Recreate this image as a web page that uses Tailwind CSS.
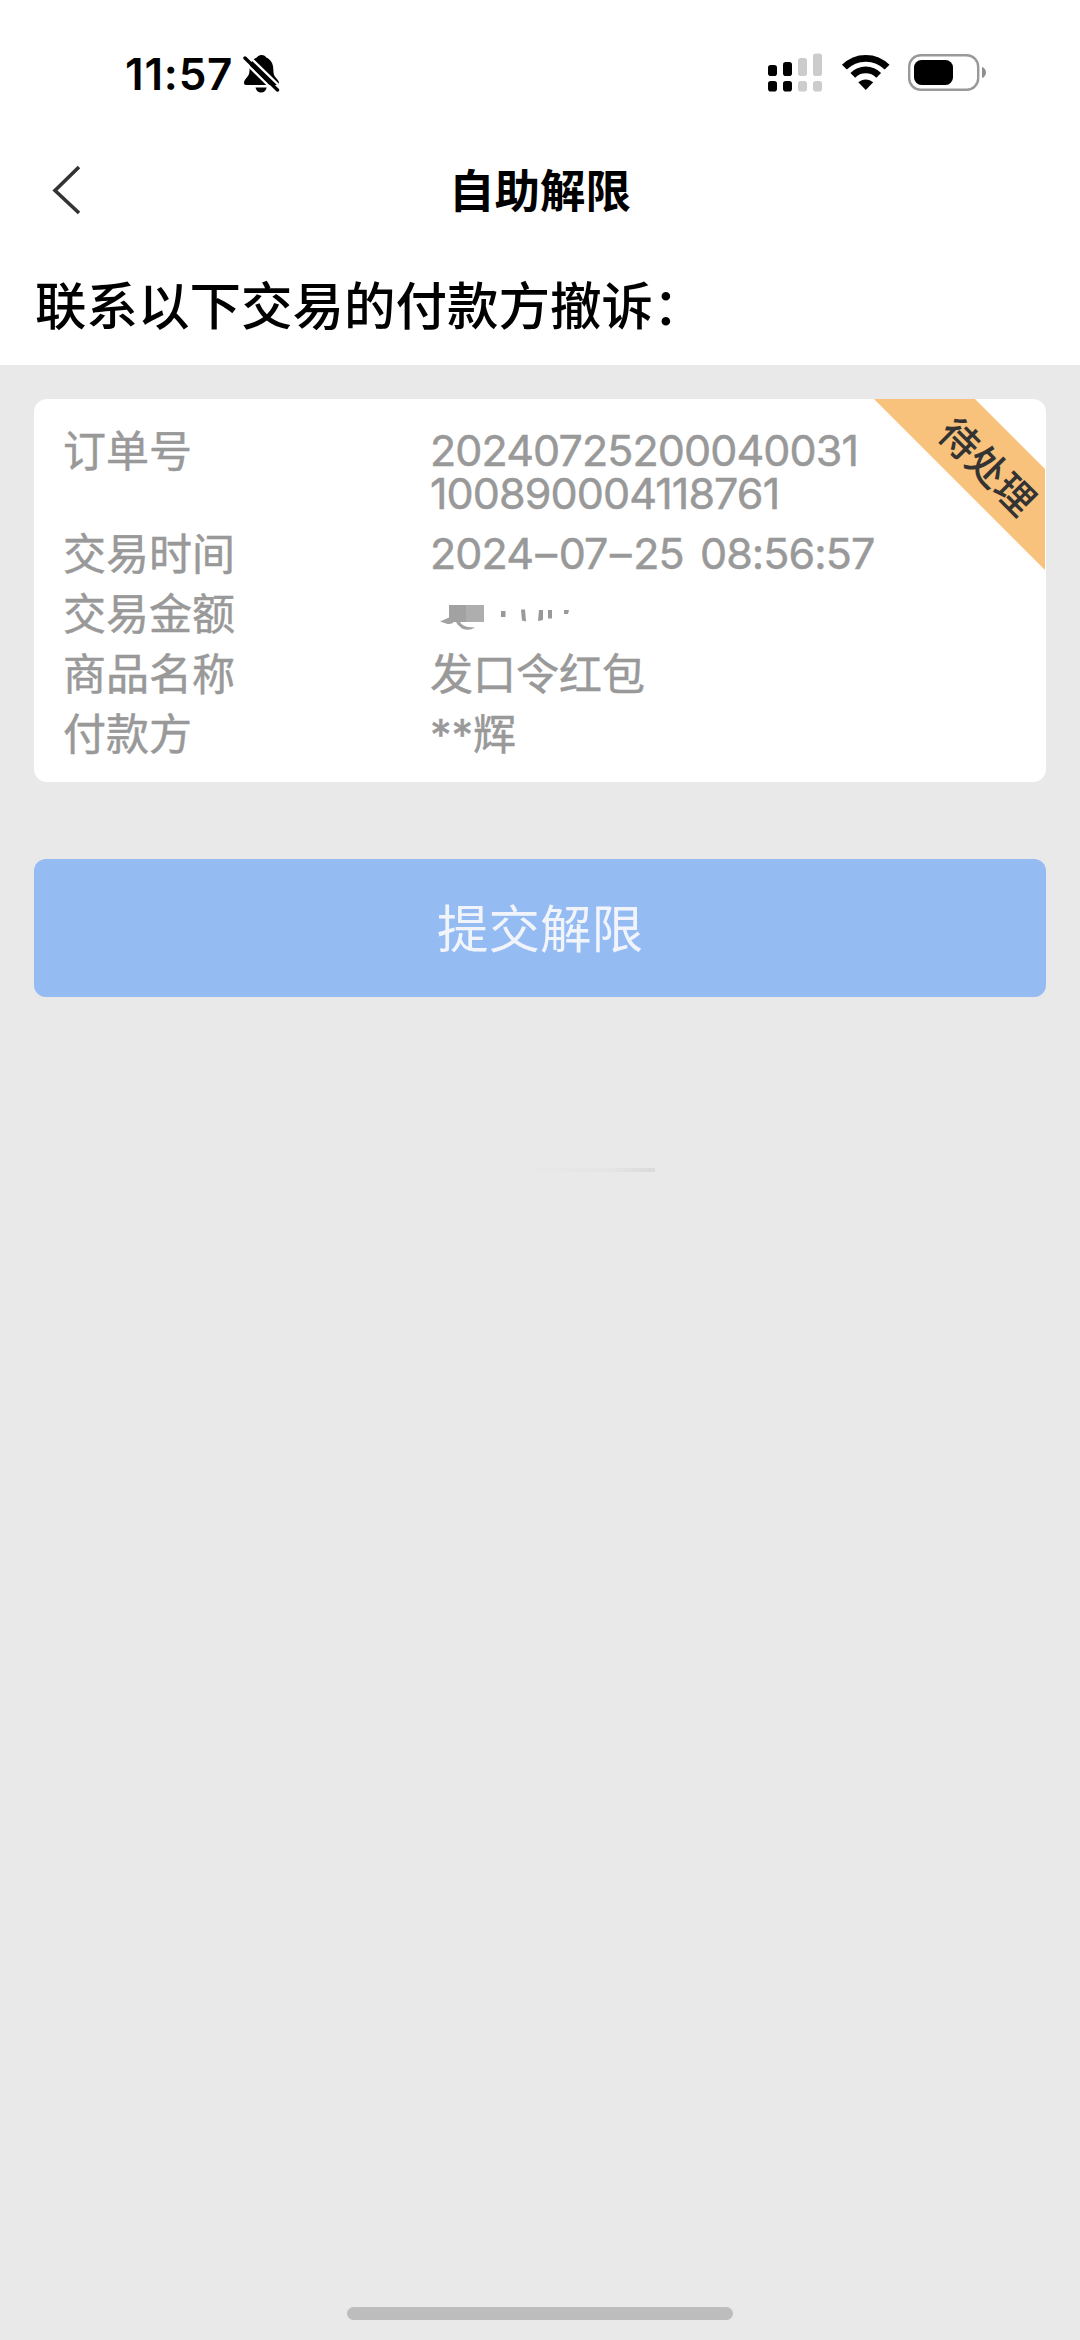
<!DOCTYPE html>
<html lang="zh-CN">
<head>
<meta charset="utf-8">
<title>自助解限</title>
<script src="https://cdn.jsdelivr.net/npm/@tailwindcss/browser@4"></script>
</head>
<body class="flex h-[2340px] w-[1080px] flex-col overflow-hidden bg-[#e9e9e9] font-['Inter','Noto_Sans_CJK_SC',sans-serif]">
  <header class="flex h-[365px] flex-col bg-white">
    <!-- status bar -->
    <div class="flex h-[140px] items-start justify-between pt-[52px] pr-[93px] pl-[125px]">
      <div class="flex items-start">
        <span class="w-[118px] text-[44px] leading-[44px] font-semibold tracking-[0.8px] whitespace-nowrap">11:57</span>
        <svg class="mt-[2px] h-[40px] w-[37px]" viewBox="0 0 37 40">
          <path d="M18.500 1C16 1 14.400 2.500 13.800 3.600C8.500 5.500 6.800 10 6.600 15C6.400 20.500 5.500 21.500 3 24.500C1.400 26.500 1 27.500 1 29C1 30.300 1.700 31 3 31H34C35.300 31 36 30.300 36 29C36 27.500 35 26 33.500 24.500C31 21.500 30.500 20.500 30.300 15C30.100 10 28 5.500 23.200 3.600C22.500 2.200 21 1 18.500 1Z"/>
          <path d="M12.500 33.500H23.700C22.900 37 21 38.600 18.100 38.600C15.200 38.600 13.300 37 12.500 33.500Z"/>
          <path d="M4.800 1.200L38 33.300" stroke="#fff" stroke-width="2.400" fill="none"/>
          <path d="M0 6.500L33 39" stroke="#fff" stroke-width="2.400" fill="none"/>
          <path d="M2 4L34.500 36" stroke="#000" stroke-width="3.400" stroke-linecap="round" fill="none"/>
        </svg>
      </div>
      <div class="flex items-start">
        <svg class="h-[40px] w-[56px]" viewBox="0 0 56 40">
          <g fill="#000">
            <rect x="1" y="13" width="9" height="11" rx="2.800"/><rect x="16" y="10" width="9" height="14" rx="2.800"/>
            <rect x="1" y="29" width="9" height="10.500" rx="2.800"/><rect x="16" y="29" width="9" height="10.500" rx="2.800"/>
          </g>
          <g fill="#ccc">
            <rect x="31" y="6" width="9" height="18" rx="2.800"/><rect x="46" y="1.500" width="9" height="22.500" rx="2.800"/>
            <rect x="31" y="29" width="9" height="10.500" rx="2.800"/><rect x="46" y="29" width="9" height="10.500" rx="2.800"/>
          </g>
        </svg>
        <svg class="ml-[18px] mt-[2px] h-[37px] w-[50px]" viewBox="0 0 50 37">
          <path d="M3.400 13.200A30 30 0 0 1 46.100 13.200" fill="none" stroke="#000" stroke-width="6.800"/>
          <path d="M11.800 21.400A18 18 0 0 1 37.700 21.400" fill="none" stroke="#000" stroke-width="6.600"/>
          <path d="M17.300 28.300C21.500 24.400 28 24.400 32.200 28.300L24.750 36Z"/>
        </svg>
        <svg class="ml-[17px] mt-[2px] h-[38px] w-[79px]" viewBox="0 0 79 38">
          <rect x="1.200" y="1.200" width="69" height="34.500" rx="11.500" fill="none" stroke="#999" stroke-width="2.400"/>
          <rect x="6" y="6" width="39" height="25" rx="7.500"/>
          <path d="M74 13C79.300 14.500 79.300 22.500 74 24Z" fill="#8f8f8f"/>
        </svg>
      </div>
    </div>
    <!-- title bar -->
    <div class="grid h-[101px] grid-cols-[1fr_auto_1fr] items-center pl-[50px] pr-[50px]">
      <svg class="mb-[2px] h-[50px] w-[30px]" viewBox="0 0 30 50"><path d="M29 2L5 25.500L29 48" fill="none" stroke="#333" stroke-width="3.600"/></svg>
      <h1 class="pt-[3px] text-[45.500px] leading-[60px] font-bold">自助解限</h1>
    </div>
    <h2 class="pl-[35px] pt-[30px] text-[51.500px] leading-[70px] font-medium whitespace-nowrap">联系以下交易的付款方撤诉：</h2>
  </header>

  <main class="flex flex-1 flex-col px-[34px] pt-[34px]">
    <section class="relative flex h-[383px] flex-col gap-[17px] overflow-hidden rounded-[13px] bg-white pt-[31px] pl-[29px] text-[43px] leading-[43px] text-[#999] [-webkit-text-stroke:0.5px_#999]">
      <div class="flex h-[86px]"><span class="w-[367px]">订单号</span><span class="-mt-px w-[460px] tracking-[-0.9px]">20240725200040031<br>100890004118761</span></div>
      <div class="flex h-[43px]"><span class="w-[367px]">交易时间</span><span class="-mt-px tracking-[-0.9px] whitespace-nowrap [word-spacing:5px]">2024<span class="mx-[2.5px]">–</span>07<span class="mx-[2.5px]">–</span>25 08:56:57</span></div>
      <div class="flex h-[43px]"><span class="w-[367px]">交易金额</span>
        <!-- masked amount -->
        <svg class="-mt-px h-[43px] w-[150px]" viewBox="0 0 150 43">
          <path d="M19 13h18v17h-7q2 4 8 5l7 .5q-6 4-13 1q-5-4-6-6.500h-2q-3 3-8 1.500l-6-2l9-4Z" fill="#a2a2a2"/>
          <path d="M36 13h18v17h-18Z" fill="#aeaeae"/>
          <path d="M71 19h4.500v6h-4.500ZM91 17.500h4l1 12l-4-1ZM109 18h4v10l-5 1ZM118 18h4v8.500h-4ZM134 18h5l-1 4h-4Z" fill="#999"/>
        </svg>
      </div>
      <div class="flex h-[43px]"><span class="w-[367px]">商品名称</span><span>发口令红包</span></div>
      <div class="flex h-[43px]"><span class="w-[367px]">付款方</span><span>**辉</span></div>
      <!-- status ribbon -->
      <div class="absolute top-0 right-[1px] h-[171px] w-[171px] bg-[#f8c27c] [clip-path:polygon(0_0,101px_0,171px_70px,171px_171px)] [-webkit-text-stroke:0]">
        <span class="absolute top-[47px] left-[53px] w-[120px] rotate-45 text-center text-[39px] leading-[42px] font-medium whitespace-nowrap text-[#333]">待处理</span>
      </div>
    </section>
    <button class="mt-[77px] flex h-[138px] items-center justify-center rounded-[12px] bg-[#94bbf2] pt-[3px] text-[51.500px] text-[#f1f4fb]">提交解限</button>
    <div class="mt-[171px] ml-[392px] h-[4px] w-[229px] bg-linear-to-r from-transparent from-40% via-[#e5e5e5] via-80% to-[#dadada]"></div>
  </main>
  <footer class="flex h-[33px] items-start justify-center"><div class="h-[13px] w-[386px] rounded-full bg-[#bdbdbd]"></div></footer>
</body>
</html>
